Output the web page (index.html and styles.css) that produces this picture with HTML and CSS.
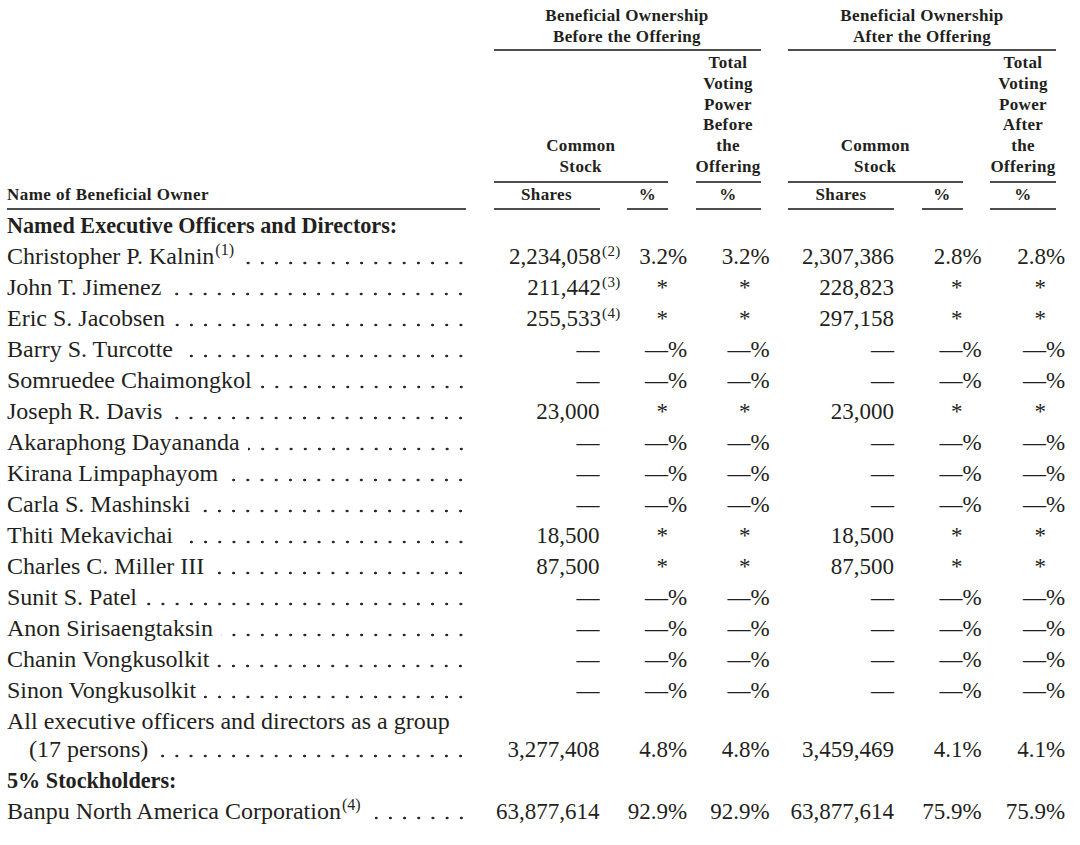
FILE: index.html
```html
<!DOCTYPE html>
<html lang="en">
<head>
<meta charset="utf-8">
<title>Beneficial Ownership</title>
<link rel="stylesheet" href="styles.css">
</head>
<body>
<div class="page">
  <div class="head">
    <div class="name-head">Name of Beneficial Owner</div>
    <div class="group-head g-before">Beneficial Ownership<br>Before the Offering</div>
    <div class="group-head g-after">Beneficial Ownership<br>After the Offering</div>
    <div class="sub-head c-stock-b">Common<br>Stock</div>
    <div class="sub-head c-power-b">Total<br>Voting<br>Power<br>Before<br>the<br>Offering</div>
    <div class="sub-head c-stock-a">Common<br>Stock</div>
    <div class="sub-head c-power-a">Total<br>Voting<br>Power<br>After<br>the<br>Offering</div>
    <div class="unit c2">Shares</div>
    <div class="unit c3">%</div>
    <div class="unit c4">%</div>
    <div class="unit c5">Shares</div>
    <div class="unit c6">%</div>
    <div class="unit c7">%</div>
  </div>

  <div class="row"><div class="name section">Named Executive Officers and Directors:</div></div>

  <div class="row">
    <div class="name"><span>Christopher P. Kalnin<sup class="fn">(1)</sup></span><span class="leader"></span></div>
    <div class="num">2,234,058<sup class="fn hang">(2)</sup></div>
    <div class="num pc">3.2<span class="pct">%</span></div>
    <div class="num tv">3.2<span class="pct">%</span></div>
    <div class="num">2,307,386</div>
    <div class="num pc">2.8<span class="pct">%</span></div>
    <div class="num tv">2.8<span class="pct">%</span></div>
  </div>
  <div class="row">
    <div class="name"><span>John T. Jimenez</span><span class="leader"></span></div>
    <div class="num">211,442<sup class="fn hang">(3)</sup></div>
    <div class="num pc">*</div>
    <div class="num tv">*</div>
    <div class="num">228,823</div>
    <div class="num pc">*</div>
    <div class="num tv">*</div>
  </div>
  <div class="row">
    <div class="name"><span>Eric S. Jacobsen</span><span class="leader"></span></div>
    <div class="num">255,533<sup class="fn hang">(4)</sup></div>
    <div class="num pc">*</div>
    <div class="num tv">*</div>
    <div class="num">297,158</div>
    <div class="num pc">*</div>
    <div class="num tv">*</div>
  </div>
  <div class="row">
    <div class="name"><span>Barry S. Turcotte</span><span class="leader"></span></div>
    <div class="num">—</div>
    <div class="num pc">—<span class="pct">%</span></div>
    <div class="num tv">—<span class="pct">%</span></div>
    <div class="num">—</div>
    <div class="num pc">—<span class="pct">%</span></div>
    <div class="num tv">—<span class="pct">%</span></div>
  </div>
  <div class="row">
    <div class="name"><span>Somruedee Chaimongkol</span><span class="leader"></span></div>
    <div class="num">—</div>
    <div class="num pc">—<span class="pct">%</span></div>
    <div class="num tv">—<span class="pct">%</span></div>
    <div class="num">—</div>
    <div class="num pc">—<span class="pct">%</span></div>
    <div class="num tv">—<span class="pct">%</span></div>
  </div>
  <div class="row">
    <div class="name"><span>Joseph R. Davis</span><span class="leader"></span></div>
    <div class="num">23,000</div>
    <div class="num pc">*</div>
    <div class="num tv">*</div>
    <div class="num">23,000</div>
    <div class="num pc">*</div>
    <div class="num tv">*</div>
  </div>
  <div class="row">
    <div class="name"><span>Akaraphong Dayananda</span><span class="leader"></span></div>
    <div class="num">—</div>
    <div class="num pc">—<span class="pct">%</span></div>
    <div class="num tv">—<span class="pct">%</span></div>
    <div class="num">—</div>
    <div class="num pc">—<span class="pct">%</span></div>
    <div class="num tv">—<span class="pct">%</span></div>
  </div>
  <div class="row">
    <div class="name"><span>Kirana Limpaphayom</span><span class="leader"></span></div>
    <div class="num">—</div>
    <div class="num pc">—<span class="pct">%</span></div>
    <div class="num tv">—<span class="pct">%</span></div>
    <div class="num">—</div>
    <div class="num pc">—<span class="pct">%</span></div>
    <div class="num tv">—<span class="pct">%</span></div>
  </div>
  <div class="row">
    <div class="name"><span>Carla S. Mashinski</span><span class="leader"></span></div>
    <div class="num">—</div>
    <div class="num pc">—<span class="pct">%</span></div>
    <div class="num tv">—<span class="pct">%</span></div>
    <div class="num">—</div>
    <div class="num pc">—<span class="pct">%</span></div>
    <div class="num tv">—<span class="pct">%</span></div>
  </div>
  <div class="row">
    <div class="name"><span>Thiti Mekavichai</span><span class="leader"></span></div>
    <div class="num">18,500</div>
    <div class="num pc">*</div>
    <div class="num tv">*</div>
    <div class="num">18,500</div>
    <div class="num pc">*</div>
    <div class="num tv">*</div>
  </div>
  <div class="row">
    <div class="name"><span>Charles C. Miller III</span><span class="leader"></span></div>
    <div class="num">87,500</div>
    <div class="num pc">*</div>
    <div class="num tv">*</div>
    <div class="num">87,500</div>
    <div class="num pc">*</div>
    <div class="num tv">*</div>
  </div>
  <div class="row">
    <div class="name"><span>Sunit S. Patel</span><span class="leader"></span></div>
    <div class="num">—</div>
    <div class="num pc">—<span class="pct">%</span></div>
    <div class="num tv">—<span class="pct">%</span></div>
    <div class="num">—</div>
    <div class="num pc">—<span class="pct">%</span></div>
    <div class="num tv">—<span class="pct">%</span></div>
  </div>
  <div class="row">
    <div class="name"><span>Anon Sirisaengtaksin</span><span class="leader"></span></div>
    <div class="num">—</div>
    <div class="num pc">—<span class="pct">%</span></div>
    <div class="num tv">—<span class="pct">%</span></div>
    <div class="num">—</div>
    <div class="num pc">—<span class="pct">%</span></div>
    <div class="num tv">—<span class="pct">%</span></div>
  </div>
  <div class="row">
    <div class="name"><span>Chanin Vongkusolkit</span><span class="leader"></span></div>
    <div class="num">—</div>
    <div class="num pc">—<span class="pct">%</span></div>
    <div class="num tv">—<span class="pct">%</span></div>
    <div class="num">—</div>
    <div class="num pc">—<span class="pct">%</span></div>
    <div class="num tv">—<span class="pct">%</span></div>
  </div>
  <div class="row">
    <div class="name"><span>Sinon Vongkusolkit</span><span class="leader"></span></div>
    <div class="num">—</div>
    <div class="num pc">—<span class="pct">%</span></div>
    <div class="num tv">—<span class="pct">%</span></div>
    <div class="num">—</div>
    <div class="num pc">—<span class="pct">%</span></div>
    <div class="num tv">—<span class="pct">%</span></div>
  </div>
  <div class="row">
    <div class="name multi">
      <div class="line">All executive officers and directors as a group</div>
      <div class="line indent"><span>(17 persons)</span><span class="leader tight"></span></div>
    </div>
    <div class="num end">3,277,408</div>
    <div class="num pc end">4.8<span class="pct">%</span></div>
    <div class="num tv end">4.8<span class="pct">%</span></div>
    <div class="num end">3,459,469</div>
    <div class="num pc end">4.1<span class="pct">%</span></div>
    <div class="num tv end">4.1<span class="pct">%</span></div>
  </div>

  <div class="row"><div class="name section">5% Stockholders:</div></div>

  <div class="row">
    <div class="name"><span>Banpu North America Corporation<sup class="fn">(4)</sup></span><span class="leader wide"></span></div>
    <div class="num">63,877,614</div>
    <div class="num pc">92.9<span class="pct">%</span></div>
    <div class="num tv">92.9<span class="pct">%</span></div>
    <div class="num">63,877,614</div>
    <div class="num pc">75.9<span class="pct">%</span></div>
    <div class="num tv">75.9<span class="pct">%</span></div>
  </div>
</div>
</body>
</html>
```

FILE: styles.css
```css
:root {
  --cols: 459px 106px 41px 65px 106px 41px 66px;
  --gap: 27.5px;
  --ink: #231f20;
  --rule: 2px solid #4d4d4d;
}

html, body {
  margin: 0;
  padding: 0;
  background: #ffffff;
}

body {
  font-family: "Liberation Serif", "Times New Roman", serif;
  color: var(--ink);
}

.page {
  padding: 5px 0 0 7px;
}

/* ---------- header ---------- */
.head {
  display: grid;
  grid-template-columns: var(--cols);
  column-gap: var(--gap);
  grid-template-rows: auto auto auto;
  font-weight: bold;
  font-size: 17px;
  letter-spacing: 0.35px;
  text-align: center;
}

.name-head {
  grid-column: 1;
  grid-row: 1 / 4;
  align-self: end;
  text-align: left;
  line-height: 21px;
  padding: 1.5px 0 2.5px;
  border-bottom: var(--rule);
  letter-spacing: 0.45px;
}

.group-head {
  grid-row: 1;
  line-height: 21px;
  padding-bottom: 2px;
  border-bottom: var(--rule);
}
.g-before { grid-column: 2 / 5; }
.g-after  { grid-column: 5 / 8; }

.sub-head {
  grid-row: 2;
  align-self: end;
  line-height: 20.8px;
  padding: 2px 0 3px;
  border-bottom: var(--rule);
}
.c-stock-b { grid-column: 2 / 4; }
.c-power-b { grid-column: 4; }
.c-stock-a { grid-column: 5 / 7; }
.c-power-a { grid-column: 7; }

.unit {
  grid-row: 3;
  line-height: 21px;
  padding: 1.5px 0 2.5px;
  border-bottom: var(--rule);
}
.c2 { grid-column: 2; }
.c3 { grid-column: 3; }
.c4 { grid-column: 4; }
.c5 { grid-column: 5; }
.c6 { grid-column: 6; }
.c7 { grid-column: 7; }

/* ---------- body rows ---------- */
.row {
  display: grid;
  grid-template-columns: var(--cols);
  column-gap: var(--gap);
  font-size: 24px;
  line-height: 31px;
}

.name {
  display: flex;
  white-space: nowrap;
}

.name.section {
  font-weight: bold;
  font-size: 22.2px;
  grid-column: 1 / 3;
}

.name.multi {
  display: block;
  padding: 1.5px 0;
  line-height: 28px;
}
.name .line.indent {
  display: flex;
  padding-left: 22px;
}

.leader {
  flex: 1;
  min-width: 12px;
  margin-left: 8px;
  background-image: radial-gradient(circle, #2a2a2a 1.1px, rgba(255,255,255,0) 1.7px);
  background-size: 14.2px 4px;
  background-repeat: repeat-x;
  background-position: right -2px bottom 6.9px;
}
.leader.tight {
  background-position: right -2px bottom 5.4px;
}
.leader.wide {
  margin-left: 14px;
}

.fn {
  font-size: 16px;
  line-height: 0;
  vertical-align: 9px;
  margin-left: 1px;
}
.num .fn {
  font-size: 15px;
  vertical-align: 8px;
  letter-spacing: 0.3px;
}
.num .fn.hang {
  margin-right: -21px;
}

.num {
  font-size: 23px;
  text-align: right;
  white-space: nowrap;
}
.num.tv {
  padding-right: 10px;
}
.num.end {
  align-self: end;
}

.pct {
  margin-right: -19.2px;
}
```
